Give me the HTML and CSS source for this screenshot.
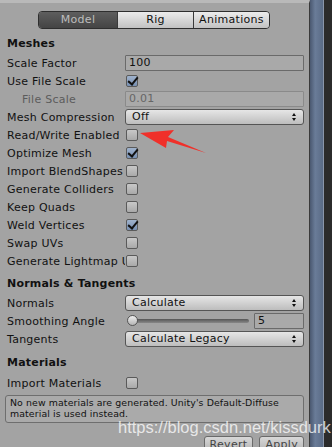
FILE: index.html
```html
<!DOCTYPE html>
<html lang="en">
<head>
    <meta charset="UTF-8">
    <meta name="viewport" content="width=device-width, initial-scale=1.0">
    <title>Model Import Settings</title>
    <link rel="stylesheet" href="styles.css">
</head>
<body>
    <div class="window">
        <div class="inspector">
            <div class="tabs">
                <div class="tab active">Model</div>
                <div class="tab">Rig</div>
                <div class="tab">Animations</div>
            </div>

            <div class="header first">Meshes</div>
            <div class="row">
                <span class="label">Scale Factor</span>
                <div class="field">100</div>
            </div>
            <div class="row">
                <span class="label">Use File Scale</span>
                <span class="check on"></span>
            </div>
            <div class="row">
                <span class="label sub">File Scale</span>
                <div class="field disabled">0.01</div>
            </div>
            <div class="row">
                <span class="label">Mesh Compression</span>
                <div class="popup">Off<span class="arrows"></span></div>
            </div>
            <div class="row">
                <span class="label">Read/Write Enabled</span>
                <span class="check"></span>
            </div>
            <div class="row">
                <span class="label">Optimize Mesh</span>
                <span class="check on"></span>
            </div>
            <div class="row">
                <span class="label">Import BlendShapes</span>
                <span class="check"></span>
            </div>
            <div class="row">
                <span class="label">Generate Colliders</span>
                <span class="check"></span>
            </div>
            <div class="row">
                <span class="label">Keep Quads</span>
                <span class="check"></span>
            </div>
            <div class="row">
                <span class="label">Weld Vertices</span>
                <span class="check on"></span>
            </div>
            <div class="row">
                <span class="label">Swap UVs</span>
                <span class="check"></span>
            </div>
            <div class="row">
                <span class="label">Generate Lightmap UVs</span>
                <span class="check"></span>
            </div>

            <div class="header">Normals &amp; Tangents</div>
            <div class="row">
                <span class="label">Normals</span>
                <div class="popup">Calculate<span class="arrows"></span></div>
            </div>
            <div class="row">
                <span class="label">Smoothing Angle</span>
                <div class="slider">
                    <div class="track"><span class="thumb"></span></div>
                    <div class="field small">5</div>
                </div>
            </div>
            <div class="row">
                <span class="label">Tangents</span>
                <div class="popup">Calculate Legacy<span class="arrows"></span></div>
            </div>

            <div class="header mat">Materials</div>
            <div class="row">
                <span class="label">Import Materials</span>
                <span class="check"></span>
            </div>
            <div class="helpbox">No new materials are generated. Unity's Default-Diffuse material is used instead.</div>

            <div class="footer">
                <div class="btn">Revert</div>
                <div class="btn">Apply</div>
            </div>
        </div>
        <div class="scrollbar"></div>
        <div class="edge"></div>

        <!-- annotation arrow -->
        <svg class="arrow" width="80" height="30" viewBox="0 0 80 30">
            <polygon points="2,3 36,0 30,7 68,23 29,11 28,18" fill="#f0302a"/>
        </svg>
        <div class="watermark">https://blog.csdn.net/kissdurk</div>
    </div>
</body>
</html>
```

FILE: styles.css
```css
*{ box-sizing: border-box;}
body{
    margin:0;
    background:#262626;
    font-family:"DejaVu Sans", sans-serif;
    font-size:11px;
    color:#111;
}
.window{
    position:relative;
    width:332px;
    height:447px;
    display:flex;
    overflow:hidden;
}
.inspector{
    width:310px;
    background:#a3a3a3;
    border-top:3px solid #b9b9b9;
    border-right:1px solid #3a3a3a;
    padding:8px 5px 0 0;
}
.scrollbar{
    width:14px;
    background:linear-gradient(to right,#4a5870,#6a7c98 40%,#5a6b86);
    border-right:1px solid #8a96aa;
}
.edge{
    flex:1;
    background:#2b2b2b;
}
.tabs{
    display:flex;
    margin-left:38px;
    width:232px;
    height:18px;
    border:1px solid #2e2e2e;
    border-radius:4px;
    overflow:hidden;
    letter-spacing:0.3px;
}
.tab{
    flex:1;
    text-align:center;
    line-height:16px;
    background:linear-gradient(#ececec,#c2c2c2);
    border-left:1px solid #3a3a3a;
}
.tab.active{
    flex:0 0 78px;
    border-left:none;
    background:linear-gradient(#5e5e5e,#444);
    color:#bdbdbd;
}
.header{
    font-weight:bold;
    height:19px;
    line-height:19px;
    padding-left:7px;
    margin:4px 0 1px;
    letter-spacing:0.2px;
}
.header.first{
    margin-top:5px;
}
.header.mat{
    margin-top:5px;
    margin-bottom:2px;
}
.row{
    display:flex;
    align-items:center;
    height:18px;
}
.label{
    flex:0 0 125px;
    padding-left:7px;
    white-space:nowrap;
    overflow:hidden;
    letter-spacing:0.25px;
}
.label.sub{
    padding-left:22px;
    color:#5c5c5c;
}
.field{
    flex:1;
    height:16px;
    line-height:14px;
    padding-left:3px;
    background:#a9a9a9;
    border:1px solid #6a6a6a;
    border-radius:1px;
    letter-spacing:0.25px;
}
.field.disabled{
    color:#666;
    border-color:#8a8a8a;
}
.field.small{
    flex:0 0 50px;
}
.check{
    width:12px;
    height:12px;
    margin-left:1px;
    border:1px solid #5a5a5a;
    border-radius:2px;
    background:linear-gradient(#c8c8c8,#a9a9a9);
    position:relative;
}
.check.on{
    background:linear-gradient(#9fb2cc,#7890b2);
}
.check.on::after{
    content:"";
    position:absolute;
    left:3px;
    top:-1px;
    width:4px;
    height:8px;
    border:solid #111;
    border-width:0 2px 2px 0;
    transform:rotate(40deg);
}
.popup{
    flex:1;
    position:relative;
    height:16px;
    line-height:14px;
    padding-left:6px;
    background:linear-gradient(#e6e6e6,#bdbdbd);
    border:1px solid #555;
    border-radius:3px;
    letter-spacing:0.25px;
}
.arrows{
    position:absolute;
    right:6px;
    top:3px;
    width:5px;
    height:8px;
}
.arrows::before,
.arrows::after{
    content:"";
    position:absolute;
    left:0;
    border-left:2.5px solid transparent;
    border-right:2.5px solid transparent;
}
.arrows::before{
    top:0;
    border-bottom:3px solid #111;
}
.arrows::after{
    bottom:0;
    border-top:3px solid #111;
}
.slider{
    flex:1;
    display:flex;
    align-items:center;
    gap:5px;
}
.track{
    flex:1;
    position:relative;
    height:4px;
    margin-left:3px;
    background:linear-gradient(#555,#888);
    border-radius:2px;
}
.thumb{
    position:absolute;
    left:-1px;
    top:-4px;
    width:11px;
    height:11px;
    border-radius:50%;
    border:1px solid #555;
    background:linear-gradient(#eee,#b5b5b5);
}
.helpbox{
    margin:3px 0 0 5px;
    height:28px;
    padding:1px 4px;
    font-size:9.4px;
    line-height:11px;
    letter-spacing:0.1px;
    background:#aaa;
    border:1px solid #6e6e6e;
    border-radius:3px;
}
.footer{
    display:flex;
    justify-content:flex-end;
    gap:6px;
    margin-top:13px;
}
.btn{
    height:18px;
    line-height:16px;
    padding:0 5px;
    color:#444;
    letter-spacing:0.3px;
    background:linear-gradient(#d8d8d8,#b0b0b0);
    border:1px solid #6a6a6a;
    border-radius:3px;
}
.arrow{
    position:absolute;
    left:138px;
    top:130px;
}
.watermark{
    position:absolute;
    left:118px;
    top:418px;
    font-family:"Liberation Sans", Arial, sans-serif;
    font-size:16.5px;
    color:rgba(255,255,255,0.75);
    white-space:nowrap;
}
```
